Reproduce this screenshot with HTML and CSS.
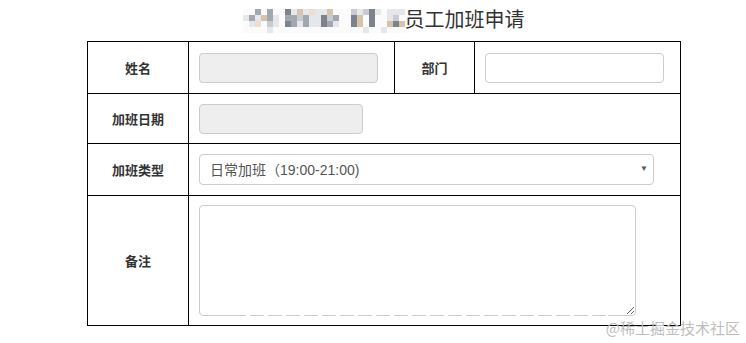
FILE: index.html
```html
<!DOCTYPE html>
<html lang="zh-CN">
<head>
    <meta charset="utf-8">
    <title>员工加班申请</title>
    <link rel="stylesheet" href="styles.css">
</head>
<body>
<div class="page">
    <div class="head">
        <div class="mosaic">
            <div class="mrow"><span class="w"></span><span class="w"></span><span class="m"></span><span class="w"></span><span class="m"></span><span class="w"></span><span class="w"></span><span class="d"></span><span class="l"></span><span class="t"></span><span class="l"></span><span class="tl"></span><span class="l"></span><span class="l"></span><span class="t"></span><span class="w"></span><span class="w"></span><span class="w"></span><span class="ml"></span><span class="l"></span><span class="ml"></span><span class="d"></span><span class="l"></span><span class="w"></span><span class="l"></span><span class="l"></span><span class="l"></span></div>
            <div class="mrow"><span class="l"></span><span class="m"></span><span class="l"></span><span class="t"></span><span class="m"></span><span class="l"></span><span class="w"></span><span class="m"></span><span class="m"></span><span class="ml"></span><span class="m"></span><span class="l"></span><span class="l"></span><span class="d"></span><span class="ml"></span><span class="m"></span><span class="w"></span><span class="w"></span><span class="d"></span><span class="t"></span><span class="w"></span><span class="d"></span><span class="w"></span><span class="w"></span><span class="l"></span><span class="ml"></span><span class="w"></span></div>
            <div class="mrow"><span class="w"></span><span class="l"></span><span class="tl"></span><span class="w"></span><span class="ml"></span><span class="l"></span><span class="w"></span><span class="d"></span><span class="m"></span><span class="l"></span><span class="m"></span><span class="l"></span><span class="l"></span><span class="d"></span><span class="m"></span><span class="l"></span><span class="w"></span><span class="w"></span><span class="d"></span><span class="t"></span><span class="w"></span><span class="d"></span><span class="w"></span><span class="w"></span><span class="t"></span><span class="d"></span><span class="t"></span></div>
            <div class="mrow"><span class="w"></span><span class="w"></span><span class="w"></span><span class="w"></span><span class="l"></span><span class="w"></span><span class="w"></span><span class="w"></span><span class="w"></span><span class="w"></span><span class="w"></span><span class="w"></span><span class="w"></span><span class="w"></span><span class="w"></span><span class="w"></span><span class="w"></span><span class="w"></span><span class="w"></span><span class="w"></span><span class="l"></span><span class="w"></span><span class="w"></span><span class="l"></span><span class="w"></span><span class="w"></span><span class="w"></span></div>
        </div>
        <h1 class="title">员工加班申请</h1>
    </div>
    <table class="form-table">
        <colgroup>
            <col class="c-label">
            <col class="c-field">
            <col class="c-label2">
            <col class="c-field2">
        </colgroup>
        <tr class="r1">
            <th>姓名</th>
            <td><input class="form-control readonly w-name" type="text" readonly></td>
            <th>部门</th>
            <td><input class="form-control w-dept" type="text"></td>
        </tr>
        <tr class="r2">
            <th>加班日期</th>
            <td colspan="3"><input class="form-control readonly w-date" type="text" readonly></td>
        </tr>
        <tr class="r3">
            <th>加班类型</th>
            <td colspan="3">
                <div class="select-wrap">
                    <select class="form-control select">
                        <option>日常加班（19:00-21:00)</option>
                    </select>
                    <span class="caret">▼</span>
                </div>
            </td>
        </tr>
        <tr class="r4">
            <th>备注</th>
            <td colspan="3"><textarea class="form-control memo"></textarea></td>
        </tr>
    </table>
</div>
<div class="ghost"></div>
<div class="watermark">@稀土掘金技术社区</div>
</body>
</html>
```

FILE: styles.css
```css
body {
    margin: 0;
    background: #fff;
    color: #333;
    font-family: "Liberation Sans", "Noto Sans CJK SC", sans-serif;
}
.page {
    width: 593px;
    margin-left: 87px;
}
.head {
    height: 41px;
    display: flex;
    justify-content: center;
    align-items: flex-start;
    padding-top: 9px;
    box-sizing: border-box;
}
.mosaic {
    width: 162px;
}
.mrow {
    display: flex;
    height: 6px;
}
.mrow span {
    width: 6px;
    height: 6px;
}
.mrow .w { background: #fbfbfb; }
.mrow .l { background: #e6e7ea; }
.mrow .ml { background: #c8ccd2; }
.mrow .m { background: #a2a8b2; }
.mrow .d { background: #7e828a; }
.mrow .t { background: #d6c3ac; }
.mrow .tl { background: #ecdfcd; }
.title {
    margin: 0;
    font-family: "Noto Sans CJK SC", sans-serif;
    font-weight: normal;
    font-size: 20px;
    line-height: 20px;
    color: #333;
}

.form-table {
    width: 593px;
    table-layout: fixed;
    border-collapse: collapse;
    border: 1px solid #000;
}
.c-label { width: 101px; }
.c-field { width: 206px; }
.c-label2 { width: 80px; }
.c-field2 { width: 206px; }
.form-table th,
.form-table td {
    border: 1px solid #000;
    padding: 0 10px;
    vertical-align: middle;
}
.form-table th {
    font-family: "Noto Sans CJK SC", sans-serif;
    font-size: 13px;
    font-weight: bold;
    color: #333;
    text-align: center;
}
.r1 { height: 52px; }
.r2 { height: 50px; }
.r3 { height: 52px; }
.r4 { height: 130px; }

.form-control {
    display: block;
    box-sizing: border-box;
    height: 30px;
    margin: 0;
    padding: 4px 10px;
    border: 1px solid #ccc;
    border-radius: 4px;
    background: #fff;
    font-family: "Liberation Sans", "Noto Sans CJK SC", sans-serif;
    font-size: 14px;
    color: #555;
    outline: none;
}
.readonly {
    background: #eee;
}
.w-name { width: 179px; }
.w-dept { width: 179px; }
.w-date { width: 164px; }

.select-wrap {
    position: relative;
    width: 455px;
}
.select {
    width: 455px;
    height: 31px;
    -webkit-appearance: none;
    appearance: none;
}
.caret {
    position: absolute;
    right: 6px;
    top: 10px;
    font-size: 8px;
    color: #555;
}
.memo {
    width: 437px;
    height: 111px;
    resize: both;
}

/* 水印残影 */
.ghost {
    position: absolute;
    left: 232px;
    top: 314px;
    width: 376px;
    height: 2px;
    background: repeating-linear-gradient(90deg, transparent 0, transparent 14px, #fff 14px, #fff 18px);
}
.watermark {
    position: absolute;
    right: 6px;
    top: 317px;
    font-family: "Noto Sans CJK SC", sans-serif;
    font-size: 15px;
    color: #bdbdbd;
}
```
